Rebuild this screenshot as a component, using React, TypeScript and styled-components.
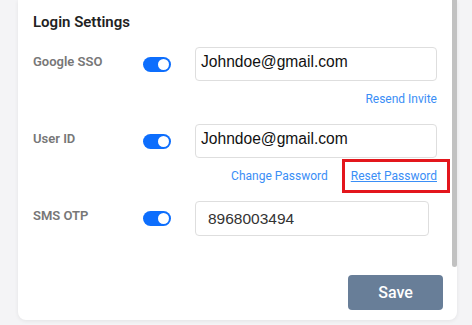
import React from 'react'
import styled, { createGlobalStyle } from 'styled-components'

const GlobalStyle = createGlobalStyle`
    html, body {
        margin: 0;
        padding: 0;
        background: #f4f4f6;
        font-family: Roboto, "Liberation Sans", Arial, sans-serif;
    }
`

const Page = styled.div`
    padding-left: 18px;
    height: 325px;
    overflow: hidden;
`

const Card = styled.div`
    position: relative;
    width: 439px;
    height: 320px;
    box-sizing: border-box;
    background: #fff;
    border-radius: 0 0 8px 8px;
    box-shadow: 0 1px 4px rgba(0, 0, 0, 0.07);
    padding: 12px 14px 0 15px;
`

const ScrollThumb = styled.div`
    position: absolute;
    top: 0;
    right: 0;
    width: 5px;
    height: 267px;
    background: #c1c1c1;
    border-radius: 0 0 3px 3px;
`

const Title = styled.h2`
    margin: 0 0 15px;
    font-size: 15px;
    line-height: 20px;
    font-weight: 600;
    color: #222;
`

const Rows = styled.div`
    display: flex;
    flex-direction: column;
    gap: 17px;
    padding-right: 6px;
`

const Setting = styled.div`
    display: grid;
    grid-template-columns: 110px 52px 1fr;
    align-items: start;
`

const Label = styled.div`
    padding-top: 7px;
    font-size: 13px;
    line-height: 16px;
    font-weight: 600;
    color: #777;
`

const Toggle = styled.span<{ $on?: boolean }>`
    position: relative;
    margin-top: 10px;
    width: 28px;
    height: 15px;
    border-radius: 8px;
    background: ${p => (p.$on ? '#0d6efd' : '#ccc')};

    &::after {
        content: '';
        position: absolute;
        top: 2px;
        right: ${p => (p.$on ? '2px' : '15px')};
        width: 11px;
        height: 11px;
        border-radius: 50%;
        background: #fff;
    }
`

const Field = styled.div`
    display: flex;
    flex-direction: column;
`

const Input = styled.div<{ $narrow?: boolean }>`
    box-sizing: border-box;
    height: ${p => (p.$narrow ? '35px' : '34px')};
    width: ${p => (p.$narrow ? '234px' : '100%')};
    border: 1px solid #dedede;
    border-radius: 4px;
    display: flex;
    align-items: center;
    padding: ${p => (p.$narrow ? '0 12px' : '0 0 5px 5px')};
    font-family: "Liberation Sans", Arial, sans-serif;
    font-size: ${p => (p.$narrow ? '15.5px' : '15.6px')};
    color: ${p => (p.$narrow ? '#333' : '#111')};
`

const Links = styled.div`
    display: flex;
    justify-content: flex-end;
    gap: 23px;
    margin-top: 10px;
`

const Link = styled.a<{ $underline?: boolean; $marked?: boolean }>`
    position: relative;
    font-size: 12px;
    line-height: 16px;
    color: #3a8ef6;
    text-decoration: ${p => (p.$underline ? 'underline' : 'none')};
    cursor: pointer;

    ${p => p.$marked && `
        &::after {
            content: '';
            position: absolute;
            top: -9px;
            bottom: -9px;
            left: -9px;
            right: -13px;
            border: 3px solid #e3161c;
        }
    `}
`

const Footer = styled.div`
    display: flex;
    justify-content: flex-end;
    margin-top: 39px;
`

const SaveButton = styled.button`
    width: 95px;
    height: 35px;
    border: none;
    border-radius: 4px;
    background: #687e98;
    color: #fff;
    font-family: inherit;
    font-size: 16px;
    font-weight: 500;
`

export default function App() {
    return (
        <Page>
            <GlobalStyle />
            <Card>
                <ScrollThumb />
                <Title>Login Settings</Title>
                <Rows>
                    <Setting>
                        <Label>Google SSO</Label>
                        <Toggle $on />
                        <Field>
                            <Input>Johndoe@gmail.com</Input>
                            <Links>
                                <Link>Resend Invite</Link>
                            </Links>
                        </Field>
                    </Setting>
                    <Setting>
                        <Label>User ID</Label>
                        <Toggle $on />
                        <Field>
                            <Input>Johndoe@gmail.com</Input>
                            <Links>
                                <Link>Change Password</Link>
                                <Link $underline $marked>Reset Password</Link>
                            </Links>
                        </Field>
                    </Setting>
                    <Setting>
                        <Label>SMS OTP</Label>
                        <Toggle $on />
                        <Field>
                            <Input $narrow>8968003494</Input>
                        </Field>
                    </Setting>
                </Rows>
                <Footer>
                    <SaveButton>Save</SaveButton>
                </Footer>
            </Card>
        </Page>
    )
}
